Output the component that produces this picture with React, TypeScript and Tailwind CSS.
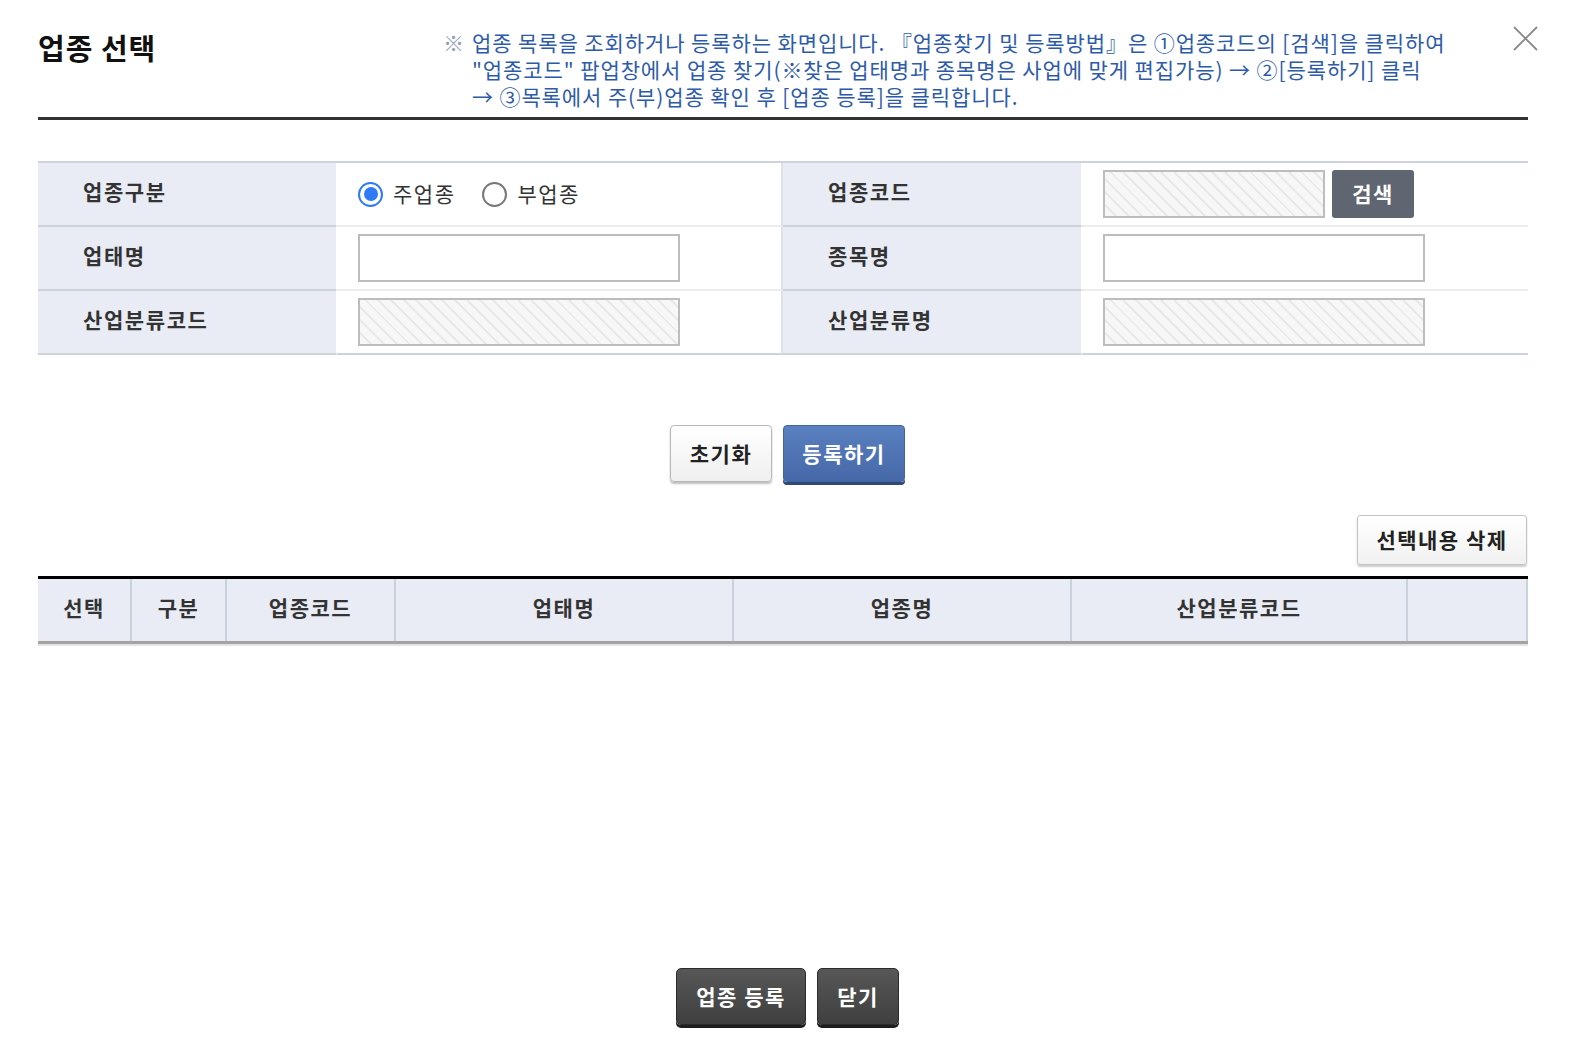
import React from "react";

const HATCH =
  "bg-[repeating-linear-gradient(45deg,#f7f7f7_0px,#f7f7f7_7px,#e9e9e9_7px,#e9e9e9_9px)]";

const Label = ({ text }: { text: string }) => (
  <div className="flex items-center bg-[#e9ecf5] pl-[45px] pb-[5px] border-r border-r-white border-b-2 border-b-[#cdd3dc] text-[21px] font-bold tracking-[1.6px] text-[#333]">
    {text}
  </div>
);

const Value = ({ children, last, divider }: { children?: React.ReactNode; last?: boolean; divider?: boolean }) => (
  <div
    className={`flex items-center gap-[7px] pl-[21px] border-b-2 ${last ? "border-b-[#cdd3dc]" : "border-b-[#ececec]"} ${divider ? "border-r-2 border-r-[#dde2e9]" : ""}`}
  >
    {children}
  </div>
);

const TextBox = ({ disabled, w = "w-[322px]" }: { disabled?: boolean; w?: string }) => (
  <div className={`${w} h-[48px] border-2 border-[#bdbdbd] ${disabled ? HATCH : "bg-white"}`} />
);

const Radio = ({ checked, label }: { checked?: boolean; label: string }) => (
  <label className="flex items-center gap-[10px] mr-[20px]">
    {checked ? (
      <span className="flex items-center justify-center w-[25px] h-[25px] rounded-full border-[2.5px] border-[#2f7af5] bg-white">
        <span className="w-[14px] h-[14px] rounded-full bg-[#2f7af5]" />
      </span>
    ) : (
      <span className="w-[25px] h-[25px] rounded-full border-2 border-[#777] bg-white" />
    )}
    <span className="text-[21px] tracking-[1.5px] text-[#333]">{label}</span>
  </label>
);

const COLUMNS = [
  { title: "선택", w: "w-[94px]" },
  { title: "구분", w: "w-[95px]" },
  { title: "업종코드", w: "w-[169px]" },
  { title: "업태명", w: "w-[338px]" },
  { title: "업종명", w: "w-[338px]" },
  { title: "산업분류코드", w: "w-[336px]" },
  { title: "", w: "flex-1" },
];

export default function App() {
  return (
    <div className="relative w-full h-screen overflow-hidden bg-white pl-[38px] pr-[50px] font-['Noto_Sans_CJK_KR','Noto_Sans',sans-serif] text-[#333]">
      <button className="absolute right-[40px] top-[26px] w-[25px] h-[25px]" aria-label="닫기">
        <svg viewBox="0 0 25 25" width="25" height="25">
          <path d="M1 1 L24 24 M24 1 L1 24" stroke="#8a8a8a" strokeWidth="1.8" fill="none" />
        </svg>
      </button>

      <header className="flex items-start pt-[29px] pb-[7px] border-b-[3px] border-[#333]">
        <h1 className="w-[405px] shrink-0 text-[29px] leading-[36px] font-bold text-[#111] tracking-[1px]">
          업종 선택
        </h1>
        <div className="flex text-[21px] leading-[27px] text-[#2d5ba8] tracking-[0.9px]">
          <span className="w-[29px] shrink-0 text-[#8ea0bc]">※</span>
          <p className="whitespace-nowrap">
            업종 목록을 조회하거나 등록하는 화면입니다. 『업종찾기 및 등록방법』은 ①업종코드의 [검색]을 클릭하여
            <br />
            "업종코드" 팝업창에서 업종 찾기(※찾은 업태명과 종목명은 사업에 맞게 편집가능) → ②[등록하기] 클릭
            <br />
            → ③목록에서 주(부)업종 확인 후 [업종 등록]을 클릭합니다.
          </p>
        </div>
      </header>

      <section className="mt-[41px] grid grid-cols-[299px_446px_299px_446px] auto-rows-[64px] border-t-2 border-[#cdd3dc]">
        <Label text="업종구분" />
        <Value divider>
          <Radio checked label="주업종" />
          <Radio label="부업종" />
        </Value>
        <Label text="업종코드" />
        <Value>
          <TextBox disabled w="w-[222px]" />
          <button className="w-[82px] h-[48px] rounded-[3px] bg-[#5f6571] text-[21px] font-bold tracking-[1.5px] text-white">
            검색
          </button>
        </Value>

        <Label text="업태명" />
        <Value divider>
          <TextBox />
        </Value>
        <Label text="종목명" />
        <Value>
          <TextBox />
        </Value>

        <Label text="산업분류코드" />
        <Value divider last>
          <TextBox disabled />
        </Value>
        <Label text="산업분류명" />
        <Value last>
          <TextBox disabled />
        </Value>
      </section>

      <div className="mt-[70px] flex justify-center gap-[11px] pl-[9px]">
        <button className="w-[102px] h-[57px] rounded-[4px] border border-[#b8b8b8] bg-gradient-to-b from-white to-[#efefef] shadow-[0_2px_2px_rgba(0,0,0,0.25)] text-[21px] font-bold tracking-[1.5px] text-[#222]">
          초기화
        </button>
        <button className="w-[122px] h-[57px] rounded-[4px] border border-[#41639e] bg-gradient-to-b from-[#5a80bf] to-[#4668a8] shadow-[0_3px_0_#2f4a78] text-[21px] font-bold tracking-[1.5px] text-white">
          등록하기
        </button>
      </div>

      <div className="mt-[33px] flex justify-end pr-[1px]">
        <button className="w-[170px] h-[50px] rounded-[3px] border border-[#c4c4c4] bg-gradient-to-b from-white to-[#f1f1f1] shadow-[0_2px_2px_rgba(0,0,0,0.2)] text-[21px] font-bold tracking-[1.5px] text-[#222]">
          선택내용 삭제
        </button>
      </div>

      <div className="mt-[11px] flex h-[68px] border-t-[3px] border-t-black border-b-[3px] border-b-[#a3a3a3] bg-[#e9ecf5]">
        {COLUMNS.map((c, i) => (
          <div
            key={i}
            className={`${c.w} flex items-center justify-center pb-[4px] border-r-2 border-r-[#c9d1dc] text-[21px] font-bold tracking-[1.5px] text-[#333]`}
          >
            {c.title}
          </div>
        ))}
      </div>
      <div className="h-[2px] bg-[#e4e4e4]" />

      <div className="mt-[322px] flex justify-center gap-[11px] pl-[9px]">
        <button className="w-[130px] h-[57px] rounded-[5px] border border-[#2c2c2c] bg-gradient-to-b from-[#575757] to-[#3f3f3f] shadow-[0_3px_0_#1e1e1e] text-[21px] font-bold tracking-[1.5px] text-white">
          업종 등록
        </button>
        <button className="w-[82px] h-[57px] rounded-[5px] border border-[#2c2c2c] bg-gradient-to-b from-[#575757] to-[#3f3f3f] shadow-[0_3px_0_#1e1e1e] text-[21px] font-bold tracking-[1.5px] text-white">
          닫기
        </button>
      </div>
    </div>
  );
}
